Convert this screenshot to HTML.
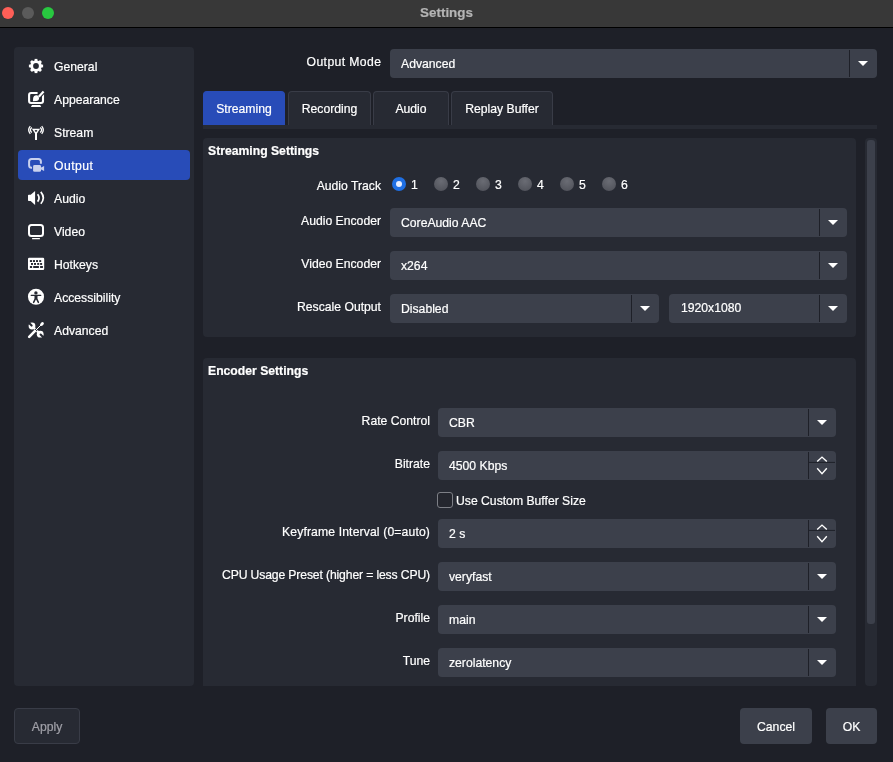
<!DOCTYPE html>
<html><head><meta charset="utf-8">
<style>
*{margin:0;padding:0;box-sizing:border-box}
html,body{width:893px;height:762px;overflow:hidden;background:#1e2028;font-family:"Liberation Sans",sans-serif;font-size:12.2px;color:#fff;-webkit-text-stroke:0.2px currentColor}
.a{position:absolute;will-change:transform}
#tb{left:0;top:0;width:893px;height:27px;background:#383838;border-bottom:1px solid #000;height:28px}
.dot{top:7px;width:12px;height:12px;border-radius:50%}
#ttl{left:0;width:893px;top:5px;text-align:center;color:#b4b4b4;font-size:13.4px;font-weight:bold}
#side{left:14px;top:47px;width:180px;height:639px;background:#272a33;border-radius:4px}
.sel{left:18px;top:150px;width:172px;height:30px;background:#284cb8;border-radius:4px}
.it{left:54px;height:16px;line-height:16px;padding-top:1px}
.ic{left:28px;width:16px;height:16px}
.lbl{text-align:right;height:16px;line-height:16px;white-space:nowrap;padding-top:1px}
.cb{background:#3c404b;border-radius:4px;height:29px}
.cb .t{position:absolute;left:11px;top:7px;line-height:16px;white-space:nowrap}
.cb .dv{position:absolute;top:1px;bottom:1px;width:1px;background:#1e2028}
.sp{position:absolute;left:370px;top:0}
.cb .ar{position:absolute;width:0;height:0;border-left:5px solid transparent;border-right:5px solid transparent;border-top:5px solid #fff}
.tab{top:91px;height:34px;background:#272a33;border:1px solid #393c47;border-bottom:none;border-radius:4px 4px 0 0;text-align:center;line-height:33px;padding-top:1px}
.grp{background:#272a33;border-radius:4px}
.gt{font-weight:bold;height:16px;line-height:16px;padding-top:1px}
.rad{top:177px;width:14px;height:14px;border-radius:50%;background:radial-gradient(circle at 50% 30%,#6a6c74,#4c4e56)}
.rl{top:177px;line-height:16px}
.btn{top:708px;height:36px;background:#3c404b;border-radius:4px;text-align:center;line-height:36px;padding-top:1px}
</style></head><body>
<div id="tb" class="a"></div>
<div class="a dot" style="left:2px;background:#ff5f57"></div>
<div class="a dot" style="left:22px;background:#5b5b5b"></div>
<div class="a dot" style="left:42px;background:#28c840"></div>
<div id="ttl" class="a">Settings</div>

<div id="side" class="a"></div>
<div class="a sel"></div>
<div class="a it" style="top:58px">General</div>
<div class="a it" style="top:91px">Appearance</div>
<div class="a it" style="top:124px">Stream</div>
<div class="a it" style="top:157px;letter-spacing:0.45px">Output</div>
<div class="a it" style="top:190px">Audio</div>
<div class="a it" style="top:223px">Video</div>
<div class="a it" style="top:256px">Hotkeys</div>
<div class="a it" style="top:289px">Accessibility</div>
<div class="a it" style="top:322px">Advanced</div>

<svg class="a" style="left:0;top:0" width="200" height="350" viewBox="0 0 200 350">
<g fill="#fff">
<circle cx="36" cy="66" r="5.8"/>
<g id="teeth"><rect x="34.6" y="58.9" width="2.8" height="3.2" transform="rotate(0 36 66)"/><rect x="34.6" y="58.9" width="2.8" height="3.2" transform="rotate(45 36 66)"/><rect x="34.6" y="58.9" width="2.8" height="3.2" transform="rotate(90 36 66)"/><rect x="34.6" y="58.9" width="2.8" height="3.2" transform="rotate(135 36 66)"/><rect x="34.6" y="58.9" width="2.8" height="3.2" transform="rotate(180 36 66)"/><rect x="34.6" y="58.9" width="2.8" height="3.2" transform="rotate(225 36 66)"/><rect x="34.6" y="58.9" width="2.8" height="3.2" transform="rotate(270 36 66)"/><rect x="34.6" y="58.9" width="2.8" height="3.2" transform="rotate(315 36 66)"/></g>
<circle cx="36" cy="66" r="2.9" fill="#272a33"/>
</g>
<g fill="none" stroke="#fff" stroke-width="2.1">
<path d="M37.6,93 L31.1,93 Q29.1,93 29.1,95 L29.1,101 Q29.1,103 31.1,103 L41,103 Q43,103 43,101 L43,94"/>
</g>
<g fill="#fff">
<path d="M38.8,96.8 L43.6,91.6" stroke="#272a33" stroke-width="4.4"/><path d="M38.8,96.8 L43.6,91.6" stroke="#fff" stroke-width="2.2"/>
<path d="M32.9,101.2 L33.2,97.8 A2.9,2.9 0 1 1 36.2,101.1 Z"/>
<path d="M32,105 L40.2,105 L41.2,107 L30.9,107 Z"/>
</g>
<g fill="#fff">
<path d="M31.9,128.8 L40.1,128.8 L37,133.4 L37,140 L35,140 L35,133.4 Z"/>
<ellipse cx="36" cy="130.8" rx="1.3" ry="0.9" fill="#272a33"/>
</g>
<g fill="none" stroke="#fff" stroke-width="1.3">
<path d="M30.3,126.2 Q27.1,130 30.3,133.8"/>
<path d="M31.8,127.4 Q29,130 31.8,132.6"/>
<path d="M41.7,126.2 Q44.9,130 41.7,133.8"/>
<path d="M40.2,127.4 Q43,130 40.2,132.6"/>
</g>
<g fill="none" stroke="#c9d1ee" stroke-width="2">
<path d="M32,167.8 L31.6,167.8 Q29.1,167.8 29.1,165.3 L29.1,161.5 Q29.1,159 31.6,159 L38.4,159 Q40.9,159 40.9,161.5 L40.9,163.8"/>
</g>
<g fill="#c9d1ee">
<rect x="33.1" y="165" width="7.9" height="6.8" rx="1.4" stroke="#284cb8" stroke-width="1.2" paint-order="stroke"/>
<path d="M40.6,167.8 L44.1,166 L44.1,171 L40.6,169.2 Z"/>
</g>
<g fill="#fff">
<path d="M28,195.6 Q28,194.8 28.8,194.8 L30.7,194.8 L35.1,190.9 L35.1,205.1 L30.7,201.1 L28.8,201.1 Q28,201.1 28,200.3 Z"/>
</g>
<g fill="none" stroke="#fff" stroke-width="1.7">
<path d="M37.6,194.2 Q40.5,198 37.6,201.6"/>
<path d="M40.8,191.9 Q45.8,198 40.8,203.7"/>
</g>
<g fill="none" stroke="#fff" stroke-width="2">
<rect x="29" y="225" width="14" height="11" rx="2.5"/>
</g>
<rect x="32" y="238" width="8" height="1.3" rx="0.6" fill="#fff"/>
<rect x="28" y="257.8" width="16.2" height="12.2" rx="1.2" fill="#fff"/>
<g fill="#272a33">
<rect x="29.9" y="260.1" width="2.2" height="1.9"/><rect x="33" y="260.1" width="2" height="1.9"/><rect x="36" y="260.1" width="2" height="1.9"/><rect x="39.2" y="260.1" width="2" height="1.9"/>
<rect x="31" y="263" width="2" height="1.9"/><rect x="34" y="263" width="2" height="1.9"/><rect x="37.2" y="263" width="2" height="1.9"/><rect x="40.1" y="263" width="2" height="1.9"/>
<rect x="29.9" y="266" width="2.2" height="2"/><rect x="33.2" y="266" width="5.7" height="2"/><rect x="40.1" y="266" width="2.8" height="2"/>
</g>
<circle cx="36" cy="296.8" r="8.05" fill="#fff"/>
<g fill="#272a33" stroke="#272a33" stroke-linecap="round">
<circle cx="35.9" cy="292.9" r="1.7" stroke="none"/>
<path d="M31.2,295.4 L40.8,295.4" stroke-width="1.1"/>
<path d="M34.4,295.2 L37.6,295.2 L37.4,299.6 L34.6,299.6 Z" stroke="none"/>
<path d="M35.2,299.2 L33.6,302.4 M36.8,299.2 L38.4,302.4" stroke-width="1.5" fill="none"/>
</g>
<g fill="#fff" stroke-linecap="round">
<circle cx="32" cy="326" r="3.4"/>
<circle cx="40.2" cy="334.2" r="3.4"/>
<path d="M33,327 L39.2,333.2" stroke="#fff" stroke-width="2.4"/>
<path d="M31.6,325.6 L28,322" stroke="#272a33" stroke-width="2.1"/>
<path d="M40.6,334.6 L44.2,338.2" stroke="#272a33" stroke-width="2.1"/>
<path d="M34.8,331.2 L41,325" stroke="#272a33" stroke-width="2.4"/>
<path d="M34.8,331.2 L41,325" stroke="#fff" stroke-width="1"/>
<path d="M29.2,336.8 L34.8,331.2" stroke="#fff" stroke-width="2.6"/>
<ellipse cx="42" cy="324" rx="2.2" ry="1.5" transform="rotate(-45 42 324)"/>
</g>
</svg>
<!-- output mode -->
<div class="a lbl" style="left:200px;width:181.4px;top:53px;letter-spacing:0.4px">Output Mode</div>
<div class="a cb" style="left:390px;top:49px;width:487px"><div class="t">Advanced</div><div class="dv" style="left:459px"></div><div class="ar" style="left:468px;top:12px"></div></div>

<!-- tabs -->
<div class="a tab" style="left:203px;width:82px;background:#284cb8;border-color:#284cb8">Streaming</div>
<div class="a tab" style="left:288px;width:83px">Recording</div>
<div class="a tab" style="left:373px;width:76px">Audio</div>
<div class="a tab" style="left:451px;width:102px">Replay Buffer</div>
<div class="a" style="left:203px;top:125px;width:674px;height:4px;background:#272a33"></div>

<!-- group 1 -->
<div class="a grp" style="left:203px;top:138px;width:653px;height:199px"></div>
<div class="a gt" style="left:208px;top:142px">Streaming Settings</div>
<div class="a lbl" style="left:200px;width:181px;top:177px">Audio Track</div>
<div class="a rad" style="left:392px;background:#1f6fe3"><div class="a" style="left:4px;top:4px;width:6px;height:6px;border-radius:50%;background:#e8eeff"></div></div>
<div class="a rl" style="left:411px">1</div>
<div class="a rad" style="left:434px"></div><div class="a rl" style="left:453px">2</div>
<div class="a rad" style="left:476px"></div><div class="a rl" style="left:495px">3</div>
<div class="a rad" style="left:518px"></div><div class="a rl" style="left:537px">4</div>
<div class="a rad" style="left:560px"></div><div class="a rl" style="left:579px">5</div>
<div class="a rad" style="left:602px"></div><div class="a rl" style="left:621px">6</div>

<div class="a lbl" style="left:200px;width:181px;top:212px">Audio Encoder</div>
<div class="a cb" style="left:390px;top:208px;width:457px"><div class="t">CoreAudio AAC</div><div class="dv" style="left:429px"></div><div class="ar" style="left:438px;top:12px"></div></div>
<div class="a lbl" style="left:200px;width:181px;top:255px">Video Encoder</div>
<div class="a cb" style="left:390px;top:251px;width:457px"><div class="t">x264</div><div class="dv" style="left:429px"></div><div class="ar" style="left:438px;top:12px"></div></div>
<div class="a lbl" style="left:200px;width:181px;top:298px">Rescale Output</div>
<div class="a cb" style="left:390px;top:294px;width:269px"><div class="t">Disabled</div><div class="dv" style="left:241px"></div><div class="ar" style="left:250px;top:12px"></div></div>
<div class="a cb" style="left:669px;top:294px;width:178px"><div class="t" style="top:6px;left:12px">1920x1080</div><div class="dv" style="left:150px"></div><div class="ar" style="left:159px;top:12px"></div></div>

<!-- group 2 -->
<div class="a grp" style="left:203px;top:358px;width:653px;height:328px;border-radius:4px 4px 0 0"></div>
<div class="a gt" style="left:208px;top:362px">Encoder Settings</div>

<div class="a lbl" style="left:200px;width:230px;top:412px">Rate Control</div>
<div class="a cb" style="left:438px;top:408px;width:398px"><div class="t">CBR</div><div class="dv" style="left:370px"></div><div class="ar" style="left:379px;top:12px"></div></div>
<div class="a lbl" style="left:200px;width:230px;top:455px">Bitrate</div>
<div class="a cb" style="left:438px;top:451px;width:398px"><div class="t">4500 Kbps</div><div class="dv" style="left:370px"></div><svg class="sp" width="28" height="29" viewBox="0 0 28 29"><path d="M1,11.4 H27" stroke="#1e2028" stroke-width="1"/><path d="M9.2,10.6 L14,6.1 L18.8,10.6 M9.2,17.3 L14,22.6 L18.8,17.3" fill="none" stroke="#fff" stroke-width="1.4"/></svg></div>
<div class="a" style="left:437px;top:492px;width:16px;height:16px;border:1.5px solid #7d7f86;border-radius:3px;background:#24262e"></div>
<div class="a" style="left:456px;top:493px;line-height:16px">Use Custom Buffer Size</div>
<div class="a lbl" style="left:200px;width:230px;top:523px;letter-spacing:0.13px">Keyframe Interval (0=auto)</div>
<div class="a cb" style="left:438px;top:519px;width:398px"><div class="t">2 s</div><div class="dv" style="left:370px"></div><svg class="sp" width="28" height="29" viewBox="0 0 28 29"><path d="M1,11.4 H27" stroke="#1e2028" stroke-width="1"/><path d="M9.2,10.6 L14,6.1 L18.8,10.6 M9.2,17.3 L14,22.6 L18.8,17.3" fill="none" stroke="#fff" stroke-width="1.4"/></svg></div>
<div class="a lbl" style="left:200px;width:230px;top:566px;letter-spacing:-0.14px">CPU Usage Preset (higher = less CPU)</div>
<div class="a cb" style="left:438px;top:562px;width:398px"><div class="t">veryfast</div><div class="dv" style="left:370px"></div><div class="ar" style="left:379px;top:12px"></div></div>
<div class="a lbl" style="left:200px;width:230px;top:609px">Profile</div>
<div class="a cb" style="left:438px;top:605px;width:398px"><div class="t">main</div><div class="dv" style="left:370px"></div><div class="ar" style="left:379px;top:12px"></div></div>
<div class="a lbl" style="left:200px;width:230px;top:652px">Tune</div>
<div class="a cb" style="left:438px;top:648px;width:398px"><div class="t">zerolatency</div><div class="dv" style="left:370px"></div><div class="ar" style="left:379px;top:12px"></div></div>

<!-- scrollbar -->
<div class="a" style="left:865px;top:138px;width:12px;height:548px;background:#272a33;border-radius:4px"></div>
<div class="a" style="left:867px;top:140px;width:8px;height:484px;background:#3c404b;border-radius:3px"></div>

<!-- buttons -->
<div class="a btn" style="left:14px;width:66px;background:#272a33;border:1px solid #393c47;color:#a0a0a8;line-height:34px">Apply</div>
<div class="a btn" style="left:740px;width:72px">Cancel</div>
<div class="a btn" style="left:826px;width:51px">OK</div>
</body></html>
